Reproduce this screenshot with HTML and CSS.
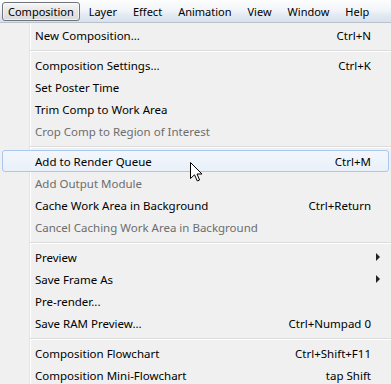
FILE: index.html
```html
<!DOCTYPE html>
<html>
<head>
<meta charset="utf-8">
<link rel="stylesheet" href="styles.css">
</head>
<body>
<div class="screen">
  <div class="menubar">
    <span class="bar-item active">Composition</span>
    <span class="bar-item">Layer</span>
    <span class="bar-item">Effect</span>
    <span class="bar-item">Animation</span>
    <span class="bar-item">View</span>
    <span class="bar-item">Window</span>
    <span class="bar-item">Help</span>
  </div>
  <div class="menu">
    <div class="item"><span class="label">New Composition...</span><span class="key">Ctrl+N</span></div>
    <div class="sep"></div>
    <div class="item"><span class="label">Composition Settings...</span><span class="key">Ctrl+K</span></div>
    <div class="item"><span class="label">Set Poster Time</span></div>
    <div class="item"><span class="label">Trim Comp to Work Area</span></div>
    <div class="item disabled"><span class="label">Crop Comp to Region of Interest</span></div>
    <div class="sep"></div>
    <div class="item hover"><span class="label">Add to Render Queue</span><span class="key">Ctrl+M</span></div>
    <div class="item disabled"><span class="label">Add Output Module</span></div>
    <div class="item"><span class="label">Cache Work Area in Background</span><span class="key">Ctrl+Return</span></div>
    <div class="item disabled"><span class="label">Cancel Caching Work Area in Background</span></div>
    <div class="sep"></div>
    <div class="item sub"><span class="label">Preview</span><span class="arrow"></span></div>
    <div class="item sub"><span class="label">Save Frame As</span><span class="arrow"></span></div>
    <div class="item"><span class="label">Pre-render...</span></div>
    <div class="item"><span class="label">Save RAM Preview...</span><span class="key">Ctrl+Numpad 0</span></div>
    <div class="sep"></div>
    <div class="item"><span class="label">Composition Flowchart</span><span class="key">Ctrl+Shift+F11</span></div>
    <div class="item"><span class="label">Composition Mini-Flowchart</span><span class="key">tap Shift</span></div>
  </div>
  <svg class="cursor" width="13" height="20" viewBox="0 0 13 20">
    <path d="M0.5 0.5 L0.5 16.5 L4.5 12.8 L7.3 19 L9.6 18 L7 12 L12 12 Z" fill="#ffffff" stroke="#000000" stroke-width="1" stroke-linejoin="miter"/>
  </svg>
</div>
</body>
</html>
```

FILE: styles.css
```css
html, body {
  margin: 0;
  padding: 0;
  background: #f0f0f0;
}

.screen {
  position: relative;
  width: 391px;
  height: 384px;
  overflow: hidden;
  font-family: "Noto Sans", "Liberation Sans", sans-serif;
  font-size: 11.5px;
  color: #000;
}

.menubar {
  height: 22px;
  border-bottom: 1px solid #b9c1cc;
  background: linear-gradient(#fdfdfe 0%, #f2f5f9 45%, #e3e9f1 70%, #d9e1ec 100%);
  display: flex;
  align-items: center;
  padding-left: 2px;
  font-size: 11px;
}

.bar-item {
  height: 19px;
  line-height: 18px;
  padding: 0 7px;
  box-sizing: border-box;
  border: 1px solid transparent;
}

.bar-item.active {
  border: 1px solid #6f737a;
  border-radius: 3px;
  background: linear-gradient(#f5f5f5 0%, #e6e6e6 50%, #d8d9da 100%);
  box-shadow: inset 0 0 0 1px rgba(255,255,255,0.6);
  padding: 0 5px 0 5px;
  margin-right: 1px;
}

.menu {
  padding-top: 1px;
  background:
    linear-gradient(to right, transparent 29px, #e2e3e3 29px, #e2e3e3 30px, #ffffff 30px, #ffffff 31px, transparent 31px),
    #f0f0f0;
}

.item {
  height: 22px;
  margin: 0 2px;
  padding: 0 17px 0 32px;
  display: flex;
  align-items: center;
  justify-content: space-between;
  box-sizing: border-box;
  border: 1px solid transparent;
  white-space: nowrap;
}

.item.disabled {
  color: #6d6d6d;
}

.item.hover {
  border: 1px solid #a9c8ef;
  border-radius: 3px;
  background: linear-gradient(#f3f7fc, #e9f0f9);
}

.key {
  text-align: right;
}

.item.sub {
  padding-right: 8px;
}

.arrow {
  width: 0;
  height: 0;
  border-top: 4px solid transparent;
  border-bottom: 4px solid transparent;
  border-left: 4px solid #222;
}

.sep {
  height: 8px;
  margin-left: 30px;
  box-sizing: border-box;
  padding-top: 4px;
}

.sep::before {
  content: "";
  display: block;
  height: 1px;
  background: #dcdcdc;
  border-bottom: 1px solid #ffffff;
}

.cursor {
  position: absolute;
  left: 190px;
  top: 162px;
}
```
